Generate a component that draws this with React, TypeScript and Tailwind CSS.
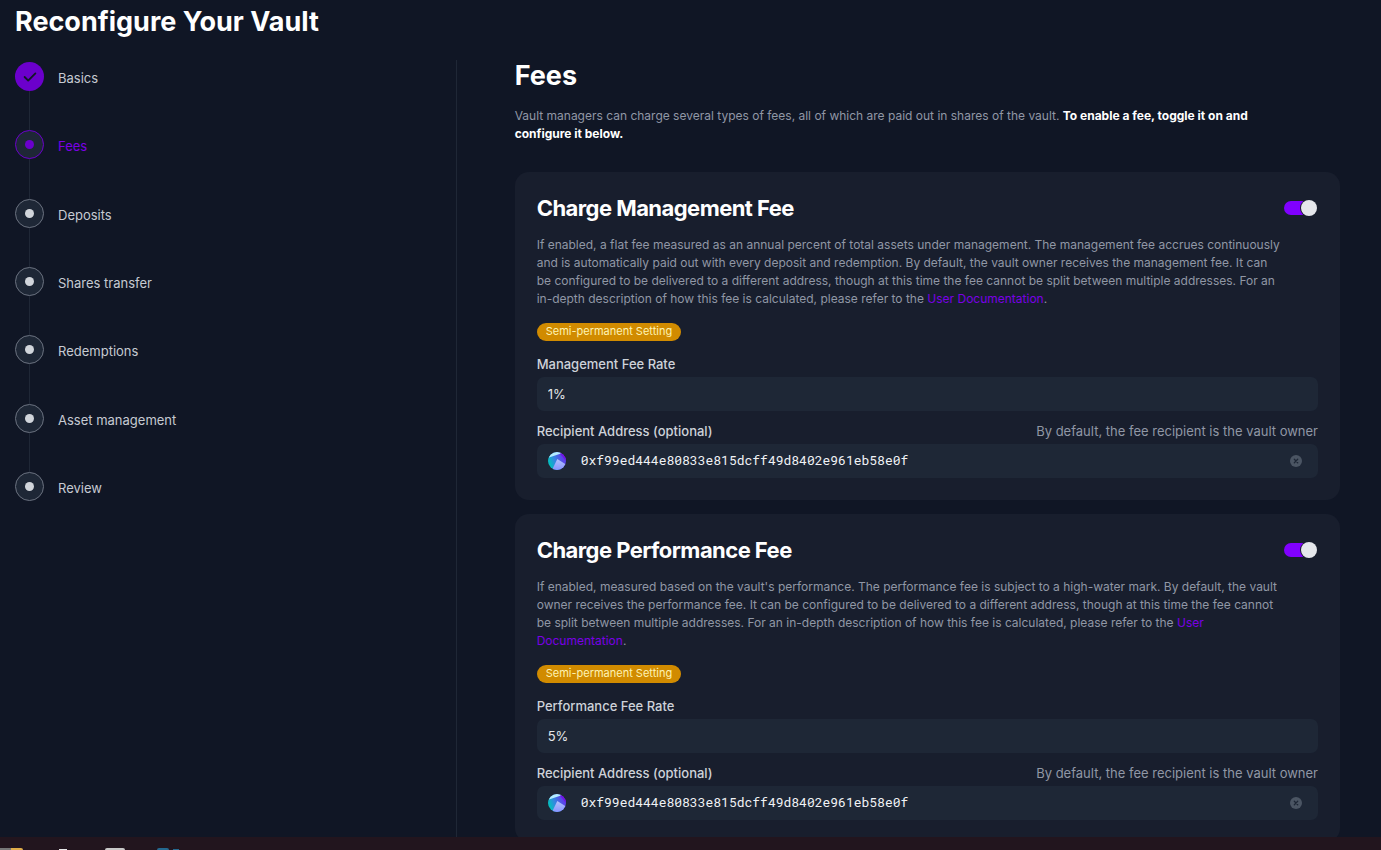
import { useState } from "react";
import type { ReactNode } from "react";

const steps = ["Basics", "Fees", "Deposits", "Shares transfer", "Redemptions", "Asset management", "Review"];
const currentStep = 1;

function StepMarker({ index }: { index: number }) {
  if (index < currentStep) {
    return (
      <span className="flex size-[29px] shrink-0 items-center justify-center rounded-full bg-[#6b00cc]">
        <svg viewBox="0 0 20 20" className="size-[18px] fill-[#111625]" aria-hidden="true">
          <path
            fillRule="evenodd"
            clipRule="evenodd"
            d="M16.707 5.293a1 1 0 010 1.414l-8 8a1 1 0 01-1.414 0l-4-4a1 1 0 011.414-1.414L8 12.586l7.293-7.293a1 1 0 011.414 0z"
          />
        </svg>
      </span>
    );
  }
  if (index === currentStep) {
    return (
      <span className="flex size-[29px] shrink-0 items-center justify-center rounded-full border border-[#6b00cc] bg-[#1e2736]">
        <span className="size-[9px] rounded-full bg-[#6b00cc]" />
      </span>
    );
  }
  return (
    <span className="flex size-[29px] shrink-0 items-center justify-center rounded-full border border-[#6b7280] bg-[#1e2736]">
      <span className="size-[9px] rounded-full bg-[#d1d5db]" />
    </span>
  );
}

function Stepper() {
  return (
    <nav aria-label="Progress">
      <ol className="flex h-[442px] flex-col">
        {steps.map((name, i) => {
          const last = i === steps.length - 1;
          return (
            <li key={name} className={last ? "flex" : "flex flex-1"}>
              <div className="flex flex-col items-center">
                <StepMarker index={i} />
                {!last && <span className="w-px flex-1 bg-[#1f2736]" />}
              </div>
              <a
                href="#"
                aria-current={i === currentStep ? "step" : undefined}
                className={
                  i === currentStep
                    ? "ml-3.5 h-8 text-[13px] leading-8 text-[#7a00e6]"
                    : "ml-3.5 h-8 text-[13px] leading-8 text-[#c6cad2]"
                }
              >
                {name}
              </a>
            </li>
          );
        })}
      </ol>
    </nav>
  );
}

function Toggle({ label }: { label: string }) {
  const [on, setOn] = useState(true);
  return (
    <label className="relative flex h-4 w-[33px] cursor-pointer items-center">
      <input
        type="checkbox"
        role="switch"
        aria-label={label}
        checked={on}
        onChange={(e) => setOn(e.target.checked)}
        className="peer h-3.5 w-full cursor-pointer appearance-none rounded-full bg-[#374151] checked:bg-[#8000ff]"
      />
      <span className="pointer-events-none absolute left-0 size-4 rounded-full bg-[#e5e7eb] ring-1 ring-[#181e2d] peer-checked:left-auto peer-checked:right-0" />
    </label>
  );
}

function Identicon({ id }: { id: string }) {
  return (
    <svg viewBox="0 0 18 18" className="size-[18px] shrink-0" aria-hidden="true">
      <defs>
        <clipPath id={`${id}-disc`}>
          <circle cx="9" cy="9" r="9" />
        </clipPath>
        <linearGradient id={`${id}-base`} x1="0" y1="0.7" x2="1" y2="0.3">
          <stop offset="0.1" stopColor="#06bcc0" />
          <stop offset="0.4" stopColor="#3388e0" />
          <stop offset="0.8" stopColor="#5a45e8" />
        </linearGradient>
        <linearGradient id={`${id}-facet`} x1="0" y1="0" x2="0" y2="1">
          <stop offset="0" stopColor="#b3c3fb" />
          <stop offset="1" stopColor="#8793ff" />
        </linearGradient>
      </defs>
      <g clipPath={`url(#${id}-disc)`}>
        <rect width="18" height="18" fill={`url(#${id}-base)`} />
        <path d="M0 0h15L13 1.500 1 5.500z" fill="#b3ecff" />
        <path d="M12 1.500L18 0v9z" fill="#7410e8" />
        <path d="M9.300 7L18 12.500V18H4z" fill={`url(#${id}-facet)`} />
      </g>
    </svg>
  );
}

interface FeeCardProps {
  id: string;
  kind: string;
  initialRate: string;
  children: ReactNode;
}

function FeeCard({ id, kind, initialRate, children }: FeeCardProps) {
  const [rate, setRate] = useState(initialRate);
  const [address, setAddress] = useState("0xf99ed444e80833e815dcff49d8402e961eb58e0f");
  return (
    <section className="rounded-[14px] bg-[#181e2d] p-[22px]">
      <div className="flex items-center justify-between pr-px">
        <h3 className="text-[22px] leading-7 font-bold tracking-tight text-white">Charge {kind} Fee</h3>
        <Toggle label={`Charge ${kind} Fee`} />
      </div>
      <p className="mt-3.5 max-w-[744px] text-[12px] leading-[18px] text-[#9097a5]">{children}</p>
      <span className="mt-[15px] block h-[18px] w-fit rounded-full bg-[#d18b00] px-[9px] text-[11px] leading-[17px] text-[#fef3b4]">
        Semi-permanent Setting
      </span>
      <label htmlFor={`${id}-rate`} className="mt-3.5 block text-[13px] leading-[18px] font-medium text-[#ced2d9]">
        {kind} Fee Rate
      </label>
      <input
        id={`${id}-rate`}
        value={rate}
        onChange={(e) => setRate(e.target.value)}
        className="mt-1 block h-[34px] w-full rounded-[7px] bg-[#1e2736] px-[11px] text-[13px] text-[#e5e7eb] outline-none"
      />
      <div className="mt-[11px] flex items-center justify-between text-[13px] leading-[18px]">
        <label htmlFor={`${id}-recipient`} className="font-medium text-[#ced2d9]">
          Recipient Address (optional)
        </label>
        <span className="text-[#9097a5]">By default, the fee recipient is the vault owner</span>
      </div>
      <div className="mt-1 flex h-[34px] items-center rounded-[7px] bg-[#1e2736] pr-4 pl-[11px]">
        <Identicon id={id} />
        <input
          id={`${id}-recipient`}
          value={address}
          onChange={(e) => setAddress(e.target.value)}
          className="ml-[15px] min-w-0 flex-1 bg-transparent font-['Roboto_Mono','Liberation_Mono',monospace] text-[13px] text-[#f0f2f5] outline-none"
        />
        <button type="button" aria-label="Clear address" onClick={() => setAddress("")}>
          <svg viewBox="0 0 12 12" className="size-3" aria-hidden="true">
            <circle cx="6" cy="6" r="6" fill="#4b5563" />
            <path d="M4.300 4.300l3.400 3.400M7.700 4.300l-3.400 3.400" stroke="#1e2736" strokeWidth="1.300" strokeLinecap="round" />
          </svg>
        </button>
      </div>
    </section>
  );
}

function DocLink() {
  return (
    <a href="#" className="text-[#7a00e6]">
      User Documentation
    </a>
  );
}

export default function App() {
  return (
    <div className="flex h-screen flex-col overflow-hidden bg-[#101625] font-['Inter',sans-serif]">
      <main className="flex min-h-0 flex-1 flex-col overflow-hidden pr-[41px] pl-[15px]">
        <h1 className="pt-1 text-[27px] leading-9 font-bold text-white">Reconfigure Your Vault</h1>
        <div className="mt-5 grid min-h-0 flex-1 grid-cols-3">
          <div className="border-r border-[#1f2736] pt-0.5">
            <Stepper />
          </div>
          <div className="col-span-2 min-h-0 overflow-hidden pl-[58px]">
            <h2 className="text-[27px] leading-8 font-bold text-white">Fees</h2>
            <p className="mt-[15px] max-w-[786px] text-[12px] leading-[18px] text-[#9097a5]">
              Vault managers can charge several types of fees, all of which are paid out in shares of the vault.{" "}
              <strong className="font-bold text-white">To enable a fee, toggle it on and configure it below.</strong>
            </p>
            <div className="mt-[29px] flex flex-col gap-3.5">
              <FeeCard id="management" kind="Management" initialRate="1%">
                If enabled, a flat fee measured as an annual percent of total assets under management. The management
                fee accrues continuously and is automatically paid out with every deposit and redemption. By default,
                the vault owner receives the management fee. It can be configured to be delivered to a different
                address, though at this time the fee cannot be split between multiple addresses. For an in-depth
                description of how this fee is calculated, please refer to the <DocLink />.
              </FeeCard>
              <FeeCard id="performance" kind="Performance" initialRate="5%">
                If enabled, measured based on the vault's performance. The performance fee is subject to a high-water
                mark. By default, the vault owner receives the performance fee. It can be configured to be delivered to
                a different address, though at this time the fee cannot be split between multiple addresses. For an
                in-depth description of how this fee is calculated, please refer to the <DocLink />.
              </FeeCard>
            </div>
          </div>
        </div>
      </main>
      <footer className="flex h-[13px] shrink-0 items-end overflow-hidden bg-[#22151e]">
        <span className="h-0.5 w-[11px] bg-[#777777]" />
        <span className="h-0.5 w-3 rounded-tr-sm bg-[#e0ad4a]" />
        <span className="ml-9 h-px w-2 bg-[#e8e8e8]" />
        <span className="ml-[38px] h-0.5 w-5 rounded-t-sm bg-[#c8c8c8]" />
        <span className="ml-8 h-0.5 w-3 rounded-t-sm bg-[#24688f]" />
        <span className="ml-1 h-px w-1.5 bg-[#24688f]" />
      </footer>
    </div>
  );
}
